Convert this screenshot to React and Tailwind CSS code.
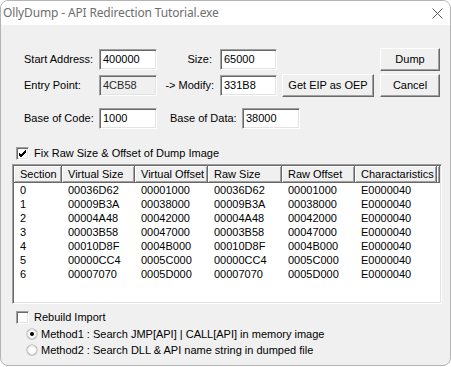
import React from 'react';

const rows = [
  ['0', '00036D62', '00001000', '00036D62', '00001000', 'E0000040'],
  ['1', '00009B3A', '00038000', '00009B3A', '00038000', 'E0000040'],
  ['2', '00004A48', '00042000', '00004A48', '00042000', 'E0000040'],
  ['3', '00003B58', '00047000', '00003B58', '00047000', 'E0000040'],
  ['4', '00010D8F', '0004B000', '00010D8F', '0004B000', 'E0000040'],
  ['5', '00000CC4', '0005C000', '00000CC4', '0005C000', 'E0000040'],
  ['6', '00007070', '0005D000', '00007070', '0005D000', 'E0000040'],
];

const cols = [
  { title: 'Section', w: 'w-[48px]' },
  { title: 'Virtual Size', w: 'w-[73px]' },
  { title: 'Virtual Offset', w: 'w-[73px]' },
  { title: 'Raw Size', w: 'w-[74px]' },
  { title: 'Raw Offset', w: 'w-[73px]' },
  { title: 'Charactaristics', w: 'w-[82px]' },
];

const Edit = ({ value, w = 'w-[58px]', disabled }) => (
  <div
    className={`${w} h-[21px] border border-t-[#a0a0a0] border-l-[#a0a0a0] border-r-white border-b-white shadow-[inset_1px_1px_0_#696969,inset_-1px_-1px_0_#e3e3e3] pl-[3px] pt-[2px] leading-[14px] ${
      disabled ? 'bg-[#f0f0f0] text-[#2a2a2a]' : 'bg-white text-black'
    }`}
  >
    {value}
  </div>
);

const Btn = ({ children, w }) => (
  <div
    className={`${w} h-[23px] flex items-center justify-center bg-[#f0f0f0] border border-t-white border-l-white border-r-[#696969] border-b-[#696969] shadow-[inset_-1px_-1px_0_#a0a0a0]`}
  >
    {children}
  </div>
);

const Check = ({ checked }) => (
  <div className="w-[13px] h-[13px] shrink-0 bg-white border border-t-[#a0a0a0] border-l-[#a0a0a0] border-r-white border-b-white shadow-[inset_1px_1px_0_#696969,inset_-1px_-1px_0_#e3e3e3] flex items-center justify-center">
    {checked && (
      <svg width="9" height="9" viewBox="0 0 9 9">
        <path d="M1 4 L3 6 L8 1 M1 5 L3 7 L8 2 M1 6 L3 8 L8 3" stroke="#000" strokeWidth="1" fill="none" />
      </svg>
    )}
  </div>
);

const Radio = ({ checked }) => (
  <svg width="12" height="12" viewBox="0 0 12 12" className="shrink-0">
    <circle cx="6" cy="6" r="5.5" fill="#a0a0a0" />
    <circle cx="6" cy="6" r="4.5" fill="#fff" stroke="#dcdcdc" strokeWidth="1" />
    {checked && <circle cx="6" cy="6" r="2" fill="#000" />}
  </svg>
);

export default function App() {
  return (
    <div className="w-[451px] h-[367px] bg-white font-['Liberation_Sans',Arial,sans-serif] text-[11px] text-black">
      <div className="w-[451px] h-[366px] border border-[#b4b4b4] rounded-[8px] overflow-hidden flex flex-col bg-[#f0f0f0]">
        {/* title bar */}
        <div className="h-[24px] bg-white flex items-center justify-between pl-[2px] pr-[7px] shrink-0">
          <span className="font-['Noto_Sans',sans-serif] text-[12px] tracking-[-0.15px] text-[#6e6e6e]">
            OllyDump - API Redirection Tutorial.exe
          </span>
          <svg width="11" height="11" viewBox="0 0 11 11">
            <path d="M0.5 0.5 L10.5 10.5 M10.5 0.5 L0.5 10.5" stroke="#5a5a5a" strokeWidth="1" />
          </svg>
        </div>

        {/* row 1 */}
        <div className="mt-[23px] h-[23px] flex items-center pl-[23px] pr-[10px]">
          <div className="w-[75px]">Start Address:</div>
          <Edit value="400000" />
          <div className="w-[63px] text-right pr-[8px]">Size:</div>
          <Edit value="65000" w="w-[57px]" />
          <div className="ml-auto">
            <Btn w="w-[60px]">Dump</Btn>
          </div>
        </div>

        {/* row 2 */}
        <div className="mt-[3px] h-[23px] flex items-center pl-[23px] pr-[10px]">
          <div className="w-[75px]">Entry Point:</div>
          <Edit value="4CB58" disabled />
          <div className="w-[63px] text-right pr-[6px]">-&gt; Modify:</div>
          <Edit value="331B8" w="w-[57px]" />
          <div className="ml-[5px]">
            <Btn w="w-[92px]">Get EIP as OEP</Btn>
          </div>
          <div className="ml-auto">
            <Btn w="w-[60px]">Cancel</Btn>
          </div>
        </div>

        {/* row 3 */}
        <div className="mt-[10px] h-[23px] flex items-center pl-[23px]">
          <div className="w-[75px]">Base of Code:</div>
          <Edit value="1000" />
          <div className="ml-[13px] w-[72px]">Base of Data:</div>
          <Edit value="38000" />
        </div>

        {/* fix raw size */}
        <div className="mt-[16px] h-[14px] flex items-center pl-[15px] gap-[5px]">
          <Check checked />
          <span>Fix Raw Size &amp; Offset of Dump Image</span>
        </div>

        {/* list view */}
        <div className="mt-[4px] ml-[11px] w-[430px] h-[140px] border border-t-[#a0a0a0] border-l-[#a0a0a0] border-r-white border-b-white shadow-[inset_1px_1px_0_#696969,inset_-1px_-1px_0_#e3e3e3] bg-white p-[1px] flex flex-col">
          <div className="h-[17px] flex bg-[#f0f0f0] shrink-0">
            {cols.map((c) => (
              <div
                key={c.title}
                className={`${c.w} h-full pl-[6px] flex items-center border-r border-b border-r-[#696969] border-b-[#696969] shadow-[inset_1px_1px_0_#fff,inset_-1px_-1px_0_#a0a0a0] whitespace-nowrap overflow-hidden`}
              >
                {c.title}
              </div>
            ))}
            <div className="w-[3px] h-full border-r border-b border-r-[#696969] border-b-[#696969] shadow-[inset_1px_1px_0_#fff,inset_-1px_-1px_0_#a0a0a0]" />
            <div className="flex-1 h-full shadow-[inset_1px_1px_0_#fff]" />
          </div>
          {rows.map((r) => (
            <div key={r[0]} className="h-[14px] flex items-center leading-[14px]">
              {r.map((v, i) => (
                <div key={i} className={`${cols[i].w} pl-[6px] whitespace-nowrap`}>
                  {v}
                </div>
              ))}
            </div>
          ))}
        </div>

        {/* rebuild import */}
        <div className="mt-[6px] h-[14px] flex items-center pl-[15px] gap-[5px]">
          <Check />
          <span>Rebuild Import</span>
        </div>
        <div className="mt-[3px] h-[14px] flex items-center pl-[25px] gap-[3px]">
          <Radio checked />
          <span>Method1 : Search JMP[API] | CALL[API] in memory image</span>
        </div>
        <div className="mt-[2px] h-[14px] flex items-center pl-[25px] gap-[3px]">
          <Radio />
          <span>Method2 : Search DLL &amp; API name string in dumped file</span>
        </div>
      </div>
    </div>
  );
}
